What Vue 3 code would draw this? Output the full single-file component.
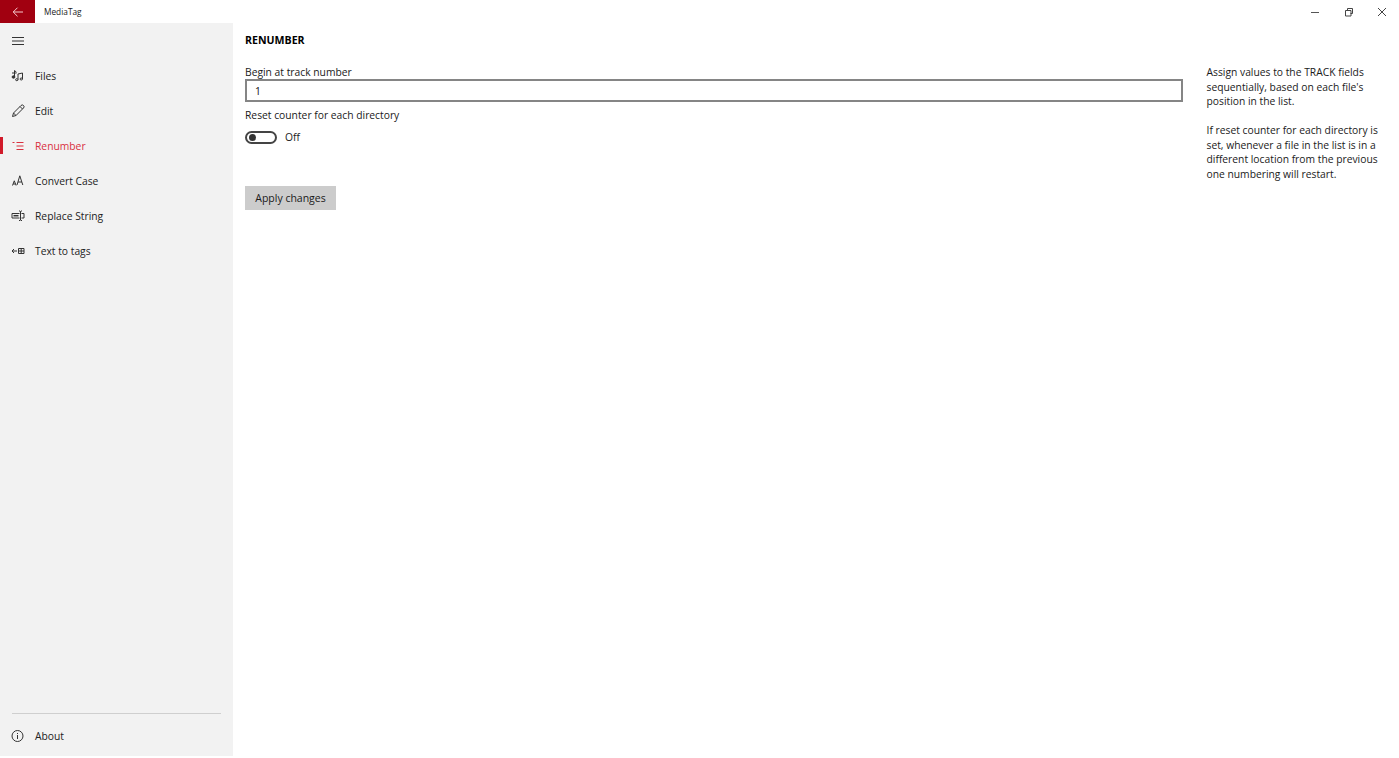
<script setup>
const items = [
  { label: 'Files', icon: 'files' },
  { label: 'Edit', icon: 'edit' },
  { label: 'Renumber', icon: 'renumber', active: true },
  { label: 'Convert Case', icon: 'case' },
  { label: 'Replace String', icon: 'replace' },
  { label: 'Text to tags', icon: 'tags' }
]
</script>

<template>
  <div class="window">
    <header class="titlebar">
      <button class="back" aria-label="Back">
        <svg width="12" height="12" viewBox="0 0 12 12" fill="none" stroke="currentColor" stroke-width="1">
          <path d="M11 6H1.2M5.5 1.700 1.200 6l4.300 4.300" />
        </svg>
      </button>
      <span class="app-name">MediaTag</span>
      <div class="window-controls">
        <svg width="10" height="10" viewBox="0 0 10 10" fill="none" stroke="#555" stroke-width="1"><path d="M1 5.500h8" /></svg>
        <svg width="10" height="10" viewBox="0 0 10 10" fill="none" stroke="#444" stroke-width="1"><path d="M1.500 3.500h5.500v5.500h-5.500zM3.500 3.500v-2h5v5h-2" /></svg>
        <svg width="10" height="10" viewBox="0 0 10 10" fill="none" stroke="#444" stroke-width="1"><path d="M1 1l8 8M9 1l-8 8" /></svg>
      </div>
    </header>

    <div class="body">
      <aside class="sidebar">
        <div class="hamburger">
          <svg width="12" height="8" viewBox="0 0 12 8" fill="none" stroke="#333" stroke-width="1"><path d="M0 .5h12M0 4h12M0 7.500h12" /></svg>
        </div>
        <nav class="nav">
          <a v-for="item in items" :key="item.label" class="nav-item" :class="{ active: item.active }">
            <span class="nav-icon">
              <svg width="14" height="14" viewBox="0 0 14 14" fill="none" stroke="currentColor" stroke-width="1">
                <template v-if="item.icon === 'files'">
                  <path d="M3.500 7.500V1.500L5.500 3.200M1 4h4.500M7 5l4.500-1v6M7 5V10.500" />
                  <ellipse cx="2.500" cy="8" rx="1.400" ry="1.200" fill="currentColor" />
                  <ellipse cx="5.800" cy="10.700" rx="1.200" ry="1" />
                  <ellipse cx="10.300" cy="10" rx="1.200" ry="1" />
                </template>
                <template v-else-if="item.icon === 'edit'">
                  <path d="M1.500 12.500l1-3.500L10 1.500a1.400 1.400 0 0 1 2.500 2.500L5 11.500zM2.500 9l2.500 2.500M9 2.500l2.500 2.500" />
                </template>
                <template v-else-if="item.icon === 'renumber'">
                  <path d="M5.500 3.500h7M5.500 7h7M5.500 10.500h7M1.500 3.500h2" />
                </template>
                <template v-else-if="item.icon === 'case'">
                  <path d="M1.500 11.500l1.800-4.700 1.800 4.700M2.200 10h2.200M6 11 8.800 1.800 11.800 11M7 8h3.800" />
                </template>
                <template v-else-if="item.icon === 'replace'">
                  <path d="M8.500 4.500H1v4.500h7.500M10.500 4.500h2.500v4.500h-2.500M8 2h1l.5.500.5-.5h1M9.500 2.500v8.500M8 11.500h1l.5-.5.5.5h1" />
                  <path d="M2.500 6.700h5" stroke-width="1.500" />
                </template>
                <template v-else>
                  <path d="M1 7h5M3 5 1 7l2 2M7.500 4.500h5.500v5h-5.500zM10.200 4.500v5M7.500 7h5.500" />
                </template>
              </svg>
            </span>
            <span class="nav-label">{{ item.label }}</span>
          </a>
        </nav>
        <div class="sidebar-footer">
          <div class="divider"></div>
          <a class="nav-item">
            <span class="nav-icon">
              <svg width="14" height="14" viewBox="0 0 14 14" fill="none" stroke="currentColor" stroke-width="1">
                <circle cx="6.500" cy="7" r="5.500" />
                <path d="M6.500 6v4M6.500 4v1" />
              </svg>
            </span>
            <span class="nav-label">About</span>
          </a>
        </div>
      </aside>

      <main class="content">
        <section class="form">
          <h1 class="heading">RENUMBER</h1>
          <label class="field-label" for="track">Begin at track number</label>
          <input id="track" class="text-input" value="1" />
          <div class="field-label reset-label">Reset counter for each directory</div>
          <div class="toggle-row">
            <span class="toggle"><span class="knob"></span></span>
            <span>Off</span>
          </div>
          <button class="apply">Apply changes</button>
        </section>
        <aside class="help">
          <p>Assign values to the TRACK fields sequentially, based on each file's position in the list.</p>
          <p>If reset counter for each directory is set, whenever a file in the list is in a different location from the previous one numbering will restart.</p>
        </aside>
      </main>
    </div>
  </div>
</template>

<style>
html, body { margin: 0; background: #fff; }
</style>

<style scoped>
.window {
  width: 1399px;
  height: 758px;
  display: flex;
  flex-direction: column;
  overflow: hidden;
  background: #fff;
  color: #1a1a1a;
  font-family: "Open Sans", "Noto Sans", sans-serif;
  font-size: 10.300px;
  line-height: 15px;
}
.titlebar {
  height: 23px;
  flex: none;
  display: flex;
  align-items: center;
}
.back {
  width: 35px;
  height: 23px;
  border: 0;
  padding: 0;
  background: #a10010;
  color: #f6c9cd;
  display: flex;
  align-items: center;
  justify-content: center;
}
.app-name { margin-left: 9px; font-size: 8.300px; }
.window-controls {
  margin-left: auto;
  padding-right: 12px;
  display: flex;
  gap: 23.500px;
}
.body { flex: 1; display: flex; min-height: 0; }
.sidebar {
  width: 233px;
  height: 733px;
  flex: none;
  background: #f2f2f2;
  display: flex;
  flex-direction: column;
}
.hamburger {
  height: 35px;
  padding-left: 12px;
  display: flex;
  align-items: center;
}
.nav { display: flex; flex-direction: column; }
.nav-item {
  height: 35px;
  display: flex;
  align-items: center;
  position: relative;
  color: #222;
}
.nav-label { padding-top: 2px; }
.nav-icon {
  width: 35px;
  padding-left: 11px;
  box-sizing: border-box;
  display: flex;
  align-items: center;
  color: #333;
}
.nav-item.active, .nav-item.active .nav-icon { color: #d9303f; }
.nav-item.active::before {
  content: "";
  position: absolute;
  left: 0;
  top: 9px;
  width: 3px;
  height: 17px;
  background: #d11a2a;
}
.sidebar-footer { margin-top: auto; padding-bottom: 3px; }
.divider { height: 1px; margin: 0 12px 4px; background: #cfcfcf; }
.content {
  flex: 1;
  display: flex;
  min-width: 0;
}
.form {
  width: 938px;
  margin-left: 12px;
  flex: none;
  display: flex;
  flex-direction: column;
  align-items: flex-start;
}
.heading {
  margin: 10px 0 17px;
  font-size: 10.600px;
  font-weight: 700;
  line-height: 15px;
  color: #000;
}
.field-label { display: block; }
.text-input {
  width: 100%;
  height: 23px;
  margin-top: -1px;
  box-sizing: border-box;
  border: 2px solid #858585;
  padding: 0 8px;
  font: inherit;
  color: #111;
  outline: none;
  background: #fff;
}
.reset-label { margin-top: 6px; }
.toggle-row {
  margin-top: 6px;
  display: flex;
  align-items: center;
  gap: 8px;
  height: 16px;
}
.toggle {
  width: 32px;
  height: 13px;
  box-sizing: border-box;
  border: 2px solid #444;
  border-radius: 7px;
  display: flex;
  align-items: center;
  padding-left: 2px;
}
.knob { width: 7px; height: 7px; border-radius: 50%; background: #333; }
.apply {
  margin-top: 41px;
  width: 91px;
  height: 24px;
  border: 0;
  padding: 0;
  background: #cccccc;
  color: #1a1a1a;
  font: inherit;
  font-size: 10.500px;
}
.help {
  width: 174px;
  margin-left: 23.500px;
  padding-top: 42px;
}
.help p { margin: 0 0 14.500px; line-height: 14.500px; }
</style>
